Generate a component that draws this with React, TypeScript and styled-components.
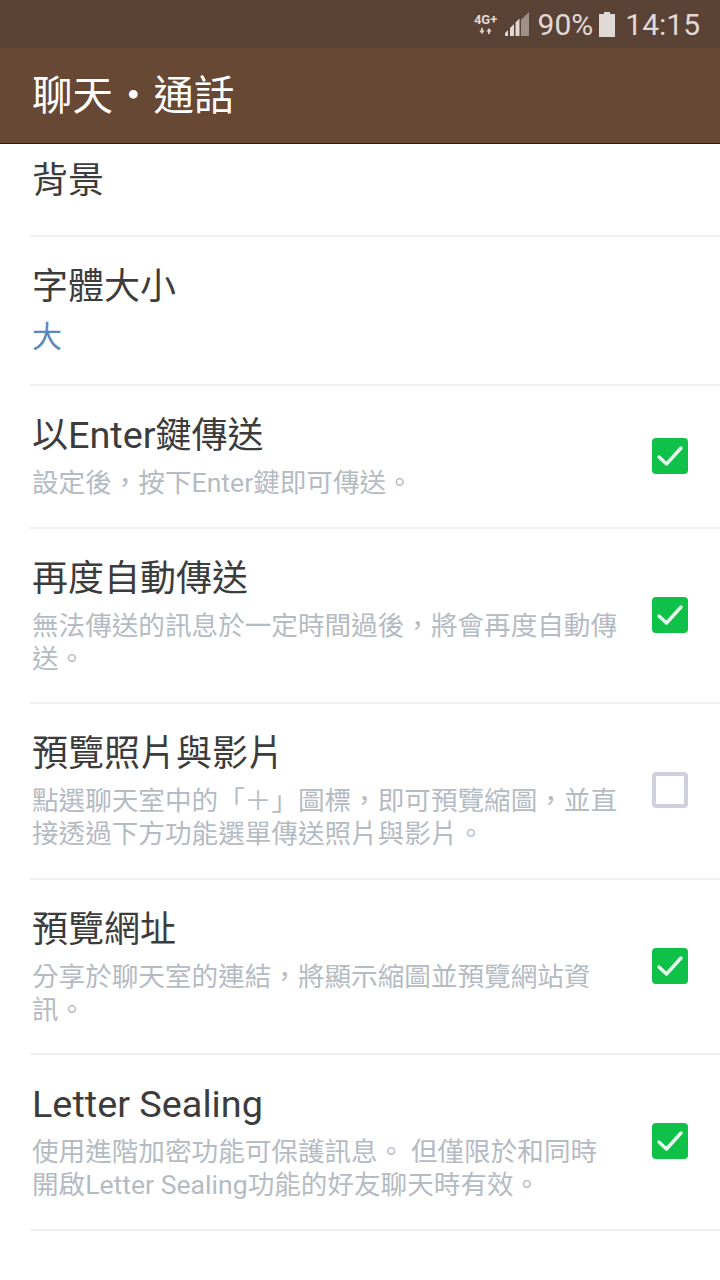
import React from "react";
import styled, { createGlobalStyle } from "styled-components";

const GlobalStyle = createGlobalStyle`
    html, body {
        margin: 0;
        padding: 0;
        background: #fff;
        font-family: "Roboto", "Noto Sans CJK TC", sans-serif;
    }
`;
const Wrapper = styled.div`
    width: 720px;
    height: 1280px;
    overflow: hidden;
    display: flex;
    flex-direction: column;
`;
const StatusBar = styled.div`
    height: 48px;
    background-color: #5a4235;
    display: flex;
    align-items: center;
    justify-content: flex-end;
    padding-right: 20px;
    color: #e0d9d5;
    font-size: 30px;
`;
const NetworkType = styled.div`
    display: flex;
    flex-direction: column;
    align-items: center;
    width: 26px;
    margin-right: 6px;
    font-size: 13px;
    font-weight: 700;
    line-height: 14px;
    svg {
        width: 15px;
        height: 8px;
    }
`;
const SignalIcon = styled.svg`
    width: 24px;
    height: 24px;
`;
const Percent = styled.span`
    margin-left: 9px;
`;
const Clock = styled.span`
    margin-left: 10px;
`;
const BatteryIcon = styled.svg`
    width: 16px;
    height: 25px;
    margin-left: 6px;
`;
const Header = styled.div`
    height: 95px;
    background-color: #664835;
    border-bottom: 1px solid #2a1a12;
    display: flex;
    align-items: center;
    padding-left: 32px;
    color: #fff;
    font-size: 40.5px;
    line-height: 40px;
`;
const Row = styled.div<{ $first?: boolean }>`
    margin-left: 30px;
    padding: ${(p) => (p.$first ? "13px 32px 30px 2px" : "26px 32px 25.5px 2px")};
    border-bottom: 2px solid #f0f0f0;
    display: flex;
    align-items: center;
    justify-content: space-between;
    box-sizing: border-box;
`;
const RowText = styled.div`
    width: 590px;
`;
const Title = styled.div`
    font-size: 36px;
    line-height: 48px;
    color: #3c3c3c;
`;
const Latin = styled.span`
    font-size: 37.8px;
    line-height: 1;
`;
const Value = styled.div`
    font-size: 30px;
    line-height: 38px;
    margin: 7px 0 2.5px;
    color: #5b87c1;
`;
const Description = styled.div`
    font-size: 26.6px;
    line-height: 33px;
    margin: 6px 0 2px;
    color: #b5bbc3;
`;
const Checkbox = styled.div<{ $checked: boolean }>`
    width: 36px;
    height: 36px;
    margin-top: -2px;
    box-sizing: border-box;
    border-radius: 4px;
    flex-shrink: 0;
    display: flex;
    align-items: center;
    justify-content: center;
    background-color: ${(p) => (p.$checked ? "#0fc148" : "#fff")};
    border: ${(p) => (p.$checked ? "none" : "4px solid #cfd2dc")};
    svg {
        width: 28px;
        height: 24px;
    }
`;

const rows = [
    { title: <>以<Latin>Enter</Latin>鍵傳送</>, key: "enter", desc: "設定後\uFF0C按下Enter鍵即可傳送。", checked: true },
    { title: "再度自動傳送", key: "resend", desc: "無法傳送的訊息於一定時間過後\uFF0C將會再度自動傳送。", checked: true },
    { title: "預覽照片與影片", key: "photo", desc: "點選聊天室中的「\uFF0B」圖標\uFF0C即可預覽縮圖\uFF0C並直接透過下方功能選單傳送照片與影片。", checked: false },
    { title: "預覽網址", key: "url", desc: "分享於聊天室的連結\uFF0C將顯示縮圖並預覽網站資訊。", checked: true },
    { title: <Latin>Letter Sealing</Latin>, key: "sealing", desc: "使用進階加密功能可保護訊息。 但僅限於和同時開啟Letter Sealing功能的好友聊天時有效。", checked: true },
];

export default function App() {
    return (
        <Wrapper>
            <GlobalStyle />
            <StatusBar>
                <NetworkType>
                    4G+
                    <svg viewBox="0 0 16 9" fill="currentColor">
                        <path d="M1 4h2V1h2v3h2L4 8zM9 5l3-4 3 4h-2v3h-2V5z" />
                    </svg>
                </NetworkType>
                <SignalIcon viewBox="0 0 24 24">
                    <path d="M16 8 24 0v24h-8z" fill="#a08f85" />
                    <path d="M0 24v-3l3-3v6zM5 24v-8l4-4v12zM10.500 24V10.500l4-4V24z" fill="#e0d9d5" />
                </SignalIcon>
                <Percent>90%</Percent>
                <BatteryIcon viewBox="0 0 16 25" fill="currentColor">
                    <path d="M5 0h6v2h5v23H0V2h5z" />
                </BatteryIcon>
                <Clock>14:15</Clock>
            </StatusBar>
            <Header>聊天・通話</Header>
            <Row $first>
                <RowText>
                    <Title>背景</Title>
                </RowText>
            </Row>
            <Row>
                <RowText>
                    <Title>字體大小</Title>
                    <Value>大</Value>
                </RowText>
            </Row>
            {rows.map((row) => (
                <Row key={row.key}>
                    <RowText>
                        <Title>{row.title}</Title>
                        <Description>{row.desc}</Description>
                    </RowText>
                    <Checkbox $checked={row.checked}>
                        {row.checked && (
                            <svg viewBox="0 0 28 24" fill="none" stroke="#e9fbef" strokeWidth="3.4" strokeLinecap="round" strokeLinejoin="round">
                                <path d="M3 13l7.500 7L25 4" />
                            </svg>
                        )}
                    </Checkbox>
                </Row>
            ))}
        </Wrapper>
    );
}
